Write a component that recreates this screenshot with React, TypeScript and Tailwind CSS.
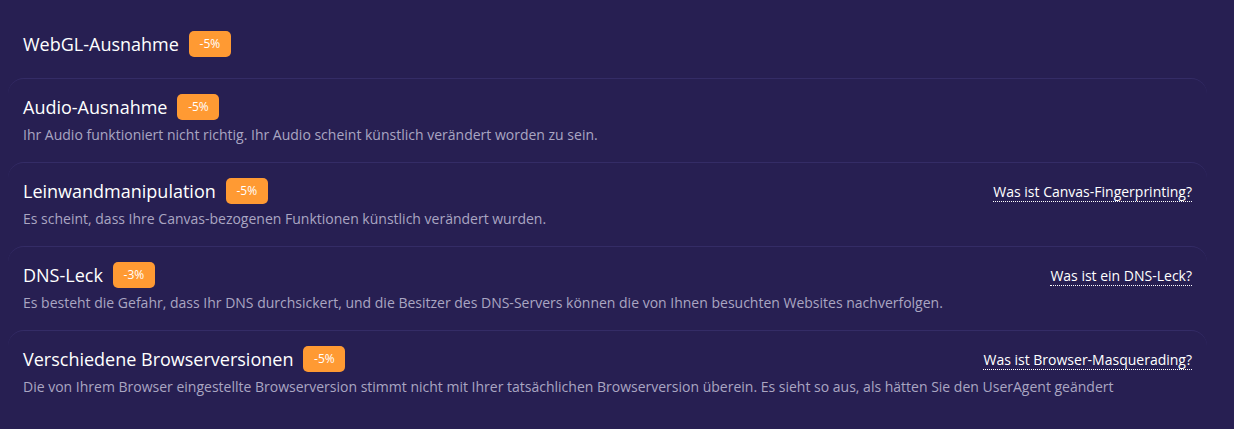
const items = [
  {
    title: "WebGL-Ausnahme",
    badge: "-5%",
  },
  {
    title: "Audio-Ausnahme",
    badge: "-5%",
    text: "Ihr Audio funktioniert nicht richtig. Ihr Audio scheint künstlich verändert worden zu sein.",
  },
  {
    title: "Leinwandmanipulation",
    badge: "-5%",
    text: "Es scheint, dass Ihre Canvas-bezogenen Funktionen künstlich verändert wurden.",
    link: "Was ist Canvas-Fingerprinting?",
  },
  {
    title: "DNS-Leck",
    badge: "-3%",
    text: "Es besteht die Gefahr, dass Ihr DNS durchsickert, und die Besitzer des DNS-Servers können die von Ihnen besuchten Websites nachverfolgen.",
    link: "Was ist ein DNS-Leck?",
  },
  {
    title: "Verschiedene Browserversionen",
    badge: "-5%",
    text: "Die von Ihrem Browser eingestellte Browserversion stimmt nicht mit Ihrer tatsächlichen Browserversion überein. Es sieht so aus, als hätten Sie den UserAgent geändert",
    link: "Was ist Browser-Masquerading?",
  },
];

export default function App() {
  return (
    <div
      className="min-h-[429px] w-full bg-[#271f52] px-2"
      style={{ fontFamily: '"Open Sans", "Noto Sans", sans-serif' }}
    >
      <div className="w-[1199px]">
        {items.map((item, i) => (
          <div
            key={item.title}
            className={
              i === 0
                ? "px-[15px] pt-[31px] pb-[21px]"
                : "rounded-t-2xl border-t border-[#342c66] px-[15px] pt-[15px] pb-[17px]"
            }
          >
            <div className="flex h-[26px] items-center justify-between">
              <div className="flex items-center gap-[10px]">
                <h3 className="text-[18px] font-normal leading-[26px] text-white">{item.title}</h3>
                <span className="flex h-[26px] w-[42px] items-center justify-center rounded-[5px] bg-[#ff9a33] text-[12px] font-medium text-white">
                  {item.badge}
                </span>
              </div>
              {item.link && (
                <a
                  href="#"
                  className="mt-[2px] border-b border-dotted border-white text-[14px] font-medium leading-[19px] text-white"
                >
                  {item.link}
                </a>
              )}
            </div>
            {item.text && (
              <p className="mt-[5px] text-[14px] font-medium leading-5 text-[#aaa6c2]">{item.text}</p>
            )}
          </div>
        ))}
      </div>
    </div>
  );
}
